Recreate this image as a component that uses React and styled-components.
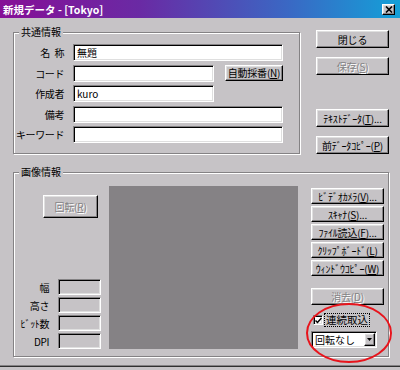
import React from "react";
import styled, { createGlobalStyle, css } from "styled-components";

const GlobalStyle = createGlobalStyle`
  html, body {
    margin: 0;
    padding: 0;
    background: #c6c3c6;
  }
  body {
    font-family: "Noto Sans CJK JP", "Noto Sans", sans-serif;
    font-size: 10px;
    color: #000;
  }
`;

const Window = styled.div`
  position: relative;
  width: 400px;
  height: 367px;
  box-sizing: border-box;
  background: #c6c3c6;
  border-bottom: 1px solid #303030;
  box-shadow: inset 0 -1px #848284;
  display: flex;
  flex-direction: column;
  overflow: hidden;
`;

const TitleBar = styled.div`
  flex: none;
  height: 18px;
  display: flex;
  align-items: center;
  justify-content: space-between;
  padding: 0 5px 0 3px;
  background: linear-gradient(90deg, #860f96 0%, #6a2aa4 35%, #3a68c4 72%, #14a0d8 100%);
  color: #fff;
  font-weight: bold;
  font-size: 10.5px;
  white-space: nowrap;
`;

const raised = css`
  box-sizing: border-box;
  background: #c6c3c6;
  border: 1px solid;
  border-color: #fff #000 #000 #fff;
  box-shadow: inset -1px -1px #848284, inset 1px 1px #dfdfdf;
`;

const sunken = css`
  box-sizing: border-box;
  border: 1px solid;
  border-color: #848284 #fff #fff #848284;
  box-shadow: inset 1px 1px #000, inset -1px -1px #dfdfdf;
`;

const CloseBox = styled.div`
  ${raised};
  width: 13px;
  height: 11px;
  display: flex;
  align-items: center;
  justify-content: center;
`;

const Body = styled.div`
  padding: 12px 0 0 13px;
`;

const TopRow = styled.div`
  display: flex;
  align-items: flex-start;
  gap: 16px;
`;

const Group = styled.div`
  position: relative;
  box-sizing: border-box;
  width: ${(p) => p.$w}px;
  height: ${(p) => p.$h}px;
  margin-top: ${(p) => p.$mt || 0}px;
  border: 1px solid #848284;
  box-shadow: inset 1px 1px #fff, 1px 1px #fff;
`;

const Legend = styled.span`
  position: absolute;
  top: -8px;
  left: 5px;
  padding: 0 2px;
  background: #c6c3c6;
  line-height: 14px;
`;

const FormGrid = styled.div`
  display: grid;
  grid-template-columns: 50px 1fr;
  column-gap: 9px;
  row-gap: 3.5px;
  grid-auto-rows: 17px;
  padding-top: 11px;
`;

const Label = styled.div`
  display: flex;
  align-items: center;
  justify-content: flex-end;
  white-space: pre;
  letter-spacing: -0.4px;
`;

const FieldRow = styled.div`
  display: flex;
  align-items: center;
`;

const Field = styled.div`
  ${sunken};
  width: ${(p) => p.$w}px;
  height: 17px;
  background: #fff;
  padding: 0 3px;
  display: flex;
  align-items: center;
  white-space: nowrap;
`;

const Button = styled.div`
  ${raised};
  width: ${(p) => (p.$w ? `${p.$w}px` : "100%")};
  height: ${(p) => p.$h || 18}px;
  margin-left: ${(p) => p.$ml || 0}px;
  margin-top: ${(p) => p.$mt || 0}px;
  display: flex;
  align-items: center;
  justify-content: center;
  white-space: nowrap;
  letter-spacing: -0.2px;
  ${(p) =>
    p.$disabled &&
    css`
      color: #848284;
      text-shadow: 1px 1px #fff;
    `}
`;

const ButtonColumn = styled.div`
  width: 73px;
  height: 124px;
  display: flex;
  flex-direction: column;
  justify-content: space-between;
`;

const ButtonPair = styled.div`
  display: flex;
  flex-direction: column;
  gap: 9px;
`;

const ImageRow = styled.div`
  display: flex;
  padding: 13px 4px 7px 0;
`;

const LeftColumn = styled.div`
  width: 95px;
  display: flex;
  flex-direction: column;
  justify-content: space-between;
`;

const InfoGrid = styled.div`
  display: grid;
  grid-template-columns: 35px 43px;
  grid-auto-rows: 16px;
  column-gap: 9px;
  row-gap: 2px;
`;

const InfoBox = styled.div`
  ${sunken};
  background: #c6c3c6;
`;

const Preview = styled.div`
  width: 189px;
  height: 163px;
  background: #858285;
`;

const RightColumn = styled.div`
  width: 73px;
  margin-left: 13px;
  padding-top: 2px;
  display: flex;
  flex-direction: column;
`;

const SourceList = styled.div`
  display: flex;
  flex-direction: column;
  gap: 2px;
`;

const CheckRow = styled.div`
  display: flex;
  align-items: center;
  height: 14px;
  margin-top: 8px;
  padding-left: 2px;
`;

const CheckBox = styled.div`
  ${sunken};
  width: 10px;
  height: 10px;
  background: #fff;
  display: flex;
  align-items: center;
  justify-content: center;
`;

const CheckLabel = styled.span`
  margin-left: 2px;
  padding: 0 1px;
  outline: 1px dotted #000;
  line-height: 12px;
  font-size: 10.5px;
`;

const Combo = styled.div`
  ${sunken};
  width: 66px;
  height: 17px;
  margin-top: 4px;
  background: #fff;
  display: flex;
  align-items: center;
  justify-content: space-between;
  padding: 0 1px 0 3px;
`;

const DropButton = styled.div`
  ${raised};
  width: 11px;
  height: 13px;
  display: flex;
  align-items: center;
  justify-content: center;
`;

const Annotation = styled.svg`
  position: absolute;
  left: 0;
  top: 0;
  pointer-events: none;
`;

export default function App() {
  return (
    <>
      <GlobalStyle />
      <Window>
        <TitleBar>
          <span>新規データ - [Tokyo]</span>
          <CloseBox>
            <svg width="8" height="7" viewBox="0 0 8 7">
              <path d="M1 0.5 L7 6.5 M7 0.5 L1 6.5" stroke="#000" strokeWidth="1.6" />
            </svg>
          </CloseBox>
        </TitleBar>
        <Body>
          <TopRow>
            <Group $w={287} $h={122} $mt={2}>
              <Legend>共通情報</Legend>
              <FormGrid>
                <Label>{"名\u2002称"}</Label>
                <Field $w={210}>無題</Field>
                <Label>コード</Label>
                <FieldRow>
                  <Field $w={141} />
                  <Button $w={58} $h={16} $ml={11} $mt={-1}>
                    自動採番(<u>N</u>)
                  </Button>
                </FieldRow>
                <Label>作成者</Label>
                <Field $w={141}>kuro</Field>
                <Label>備考</Label>
                <Field $w={210} />
                <Label>キーワード</Label>
                <Field $w={210} />
              </FormGrid>
            </Group>
            <ButtonColumn>
              <ButtonPair>
                <Button>閉じる</Button>
                <Button $disabled>
                  保存(<u>S</u>)
                </Button>
              </ButtonPair>
              <ButtonPair>
                <Button>
                  ﾃｷｽﾄﾃﾞｰﾀ(<u>T</u>)...
                </Button>
                <Button>
                  前ﾃﾞｰﾀｺﾋﾟｰ(<u>P</u>)
                </Button>
              </ButtonPair>
            </ButtonColumn>
          </TopRow>

          <Group $w={376} $h={185} $mt={18}>
            <Legend>画像情報</Legend>
            <ImageRow>
              <LeftColumn>
                <Button $w={55} $h={23} $ml={29} $mt={9} $disabled>
                  回転(<u>R</u>)
                </Button>
                <InfoGrid>
                  <Label>幅</Label>
                  <InfoBox />
                  <Label>高さ</Label>
                  <InfoBox />
                  <Label>ﾋﾞｯﾄ数</Label>
                  <InfoBox />
                  <Label>DPI</Label>
                  <InfoBox />
                </InfoGrid>
              </LeftColumn>
              <Preview />
              <RightColumn>
                <SourceList>
                  <Button $h={16}>
                    ﾋﾞﾃﾞｵｶﾒﾗ(<u>V</u>)...
                  </Button>
                  <Button $h={16}>
                    ｽｷｬﾅ(<u>S</u>)...
                  </Button>
                  <Button $h={16}>
                    ﾌｧｲﾙ読込(<u>F</u>)...
                  </Button>
                  <Button $h={16}>
                    ｸﾘｯﾌﾟﾎﾞｰﾄﾞ(<u>L</u>)
                  </Button>
                  <Button $h={16}>
                    ｳｨﾝﾄﾞｳｺﾋﾟｰ(<u>W</u>)
                  </Button>
                </SourceList>
                <Button $h={17} $mt={12} $disabled>
                  消去(<u>D</u>)
                </Button>
                <CheckRow>
                  <CheckBox>
                    <svg width="7" height="7" viewBox="0 0 7 7">
                      <path d="M0.5 3.5 L2.5 5.5 L6.5 1" stroke="#000" strokeWidth="1.5" fill="none" />
                    </svg>
                  </CheckBox>
                  <CheckLabel>連続取込</CheckLabel>
                </CheckRow>
                <Combo>
                  <span>回転なし</span>
                  <DropButton>
                    <svg width="5" height="3" viewBox="0 0 5 3">
                      <path d="M0 0 H5 L2.5 3 Z" fill="#000" />
                    </svg>
                  </DropButton>
                </Combo>
              </RightColumn>
            </ImageRow>
          </Group>
        </Body>
        <Annotation width="400" height="370">
          <ellipse cx="349" cy="333" rx="42" ry="29" fill="none" stroke="#e8141c" strokeWidth="2" />
        </Annotation>
      </Window>
    </>
  );
}
